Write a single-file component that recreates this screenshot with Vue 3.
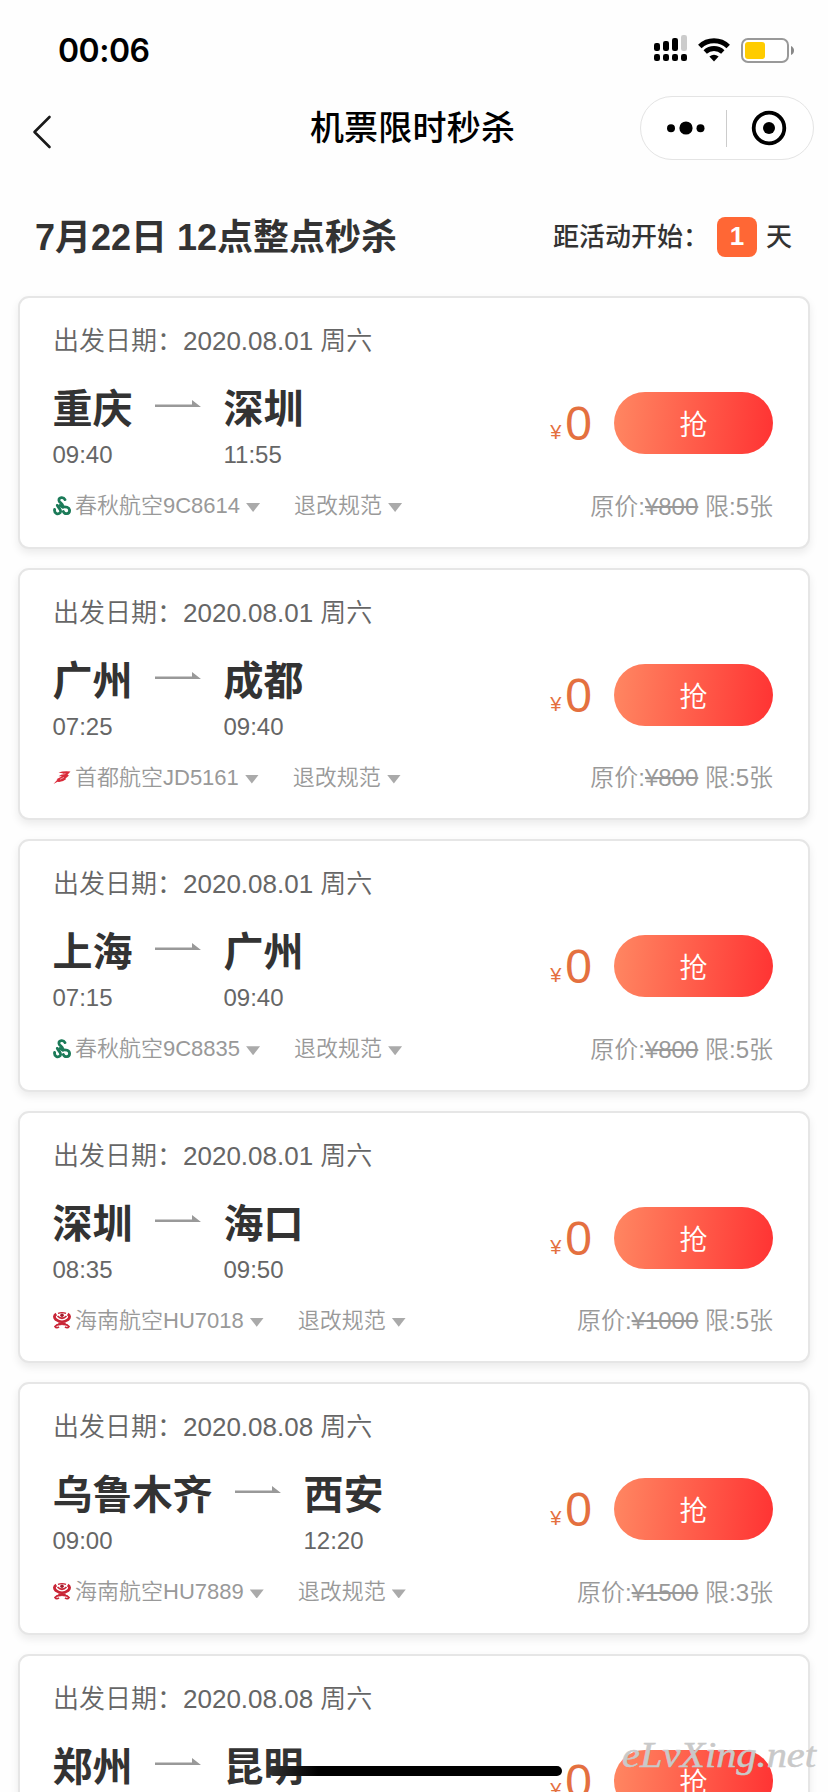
<script setup>
import { ref } from 'vue'

const flights = ref([
  { date: '2020.08.01 周六', from: '重庆', to: '深圳', depart: '09:40', arrive: '11:55', logo: 'spring', flight: '春秋航空9C8614', price: 800, limit: 5 },
  { date: '2020.08.01 周六', from: '广州', to: '成都', depart: '07:25', arrive: '09:40', logo: 'capital', flight: '首都航空JD5161', price: 800, limit: 5 },
  { date: '2020.08.01 周六', from: '上海', to: '广州', depart: '07:15', arrive: '09:40', logo: 'spring', flight: '春秋航空9C8835', price: 800, limit: 5 },
  { date: '2020.08.01 周六', from: '深圳', to: '海口', depart: '08:35', arrive: '09:50', logo: 'hainan', flight: '海南航空HU7018', price: 1000, limit: 5 },
  { date: '2020.08.08 周六', from: '乌鲁木齐', to: '西安', depart: '09:00', arrive: '12:20', logo: 'hainan', flight: '海南航空HU7889', price: 1500, limit: 3 },
  { date: '2020.08.08 周六', from: '郑州', to: '昆明', depart: '', arrive: '', logo: '', flight: '', price: 0, limit: 0 }
])
</script>

<template>
  <div class="page">
    <div class="status-bar">
      <span class="status-bar__time">00:06</span>
      <div class="status-bar__icons">
        <svg class="status-bar__signal" width="34" height="27" viewBox="0 0 34 27">
          <rect x="0" y="8" width="6" height="8" rx="2.2" />
          <rect x="9" y="6" width="6" height="10" rx="2.2" />
          <rect x="18" y="3" width="6" height="13" rx="2.2" />
          <rect x="27" y="0" width="6" height="16" rx="2.2" fill="#ccc" />
          <rect v-for="n in 4" :key="n" :x="(n - 1) * 9" y="19" width="6" height="7" rx="2.2" />
        </svg>
        <svg class="status-bar__wifi" width="32" height="24" viewBox="0 0 32 24">
          <path d="M1.8 8.5A20.5 20.5 0 0 1 30.2 8.5" fill="none" stroke="#000" stroke-width="5" />
          <path d="M7.2 14A12.8 12.8 0 0 1 24.8 14" fill="none" stroke="#000" stroke-width="4.8" />
          <path d="M11.4 18.6Q16 15 20.6 18.6L16 23.4Z" />
        </svg>
        <svg class="status-bar__battery" width="53" height="25" viewBox="0 0 53 25">
          <rect x="1" y="1" width="46" height="23" rx="6" fill="#fff" stroke="#999" stroke-width="2" />
          <rect x="4" y="4" width="20" height="17" rx="3" fill="#fc0" />
          <path d="M50 8Q53 9.500 53 12.500Q53 15.500 50 17Z" fill="#888" />
        </svg>
      </div>
    </div>

    <header class="nav">
      <svg class="nav__back" width="20" height="36" viewBox="0 0 20 36">
        <path d="M17.500 3L2.500 18L17.500 33" fill="none" stroke="#1a1a1a" stroke-width="2.600" stroke-linecap="round" stroke-linejoin="round" />
      </svg>
      <h1 class="nav__title">机票限时秒杀</h1>
      <div class="nav__capsule">
        <svg width="38" height="14" viewBox="0 0 38 14">
          <circle cx="4" cy="7.300" r="4" />
          <circle cx="19" cy="7" r="6.600" />
          <circle cx="33.500" cy="7.300" r="4" />
        </svg>
        <span class="nav__divider"></span>
        <svg width="36" height="36" viewBox="0 0 36 36">
          <circle cx="18" cy="18" r="15.300" fill="none" stroke="#000" stroke-width="3.800" />
          <circle cx="18" cy="18" r="6" />
        </svg>
      </div>
    </header>

    <section class="session">
      <h2 class="session__title">7月22日 12点整点秒杀</h2>
      <div class="session__countdown">
        <span class="session__label">距活动开始：</span>
        <span class="session__days">1</span>
        <span class="session__label">天</span>
      </div>
    </section>

    <main class="list">
      <article v-for="(item, index) in flights" :key="index" class="card">
        <p class="card__date">出发日期：{{ item.date }}</p>
        <div class="card__main">
          <div class="card__route">
            <div class="card__stop">
              <strong class="card__city">{{ item.from }}</strong>
              <span class="card__time">{{ item.depart }}</span>
            </div>
            <svg class="card__arrow" width="46" height="8" viewBox="0 0 46 8">
              <path d="M0 4.500H37V0L46 7H0Z" fill="#999" />
            </svg>
            <div class="card__stop">
              <strong class="card__city">{{ item.to }}</strong>
              <span class="card__time">{{ item.arrive }}</span>
            </div>
          </div>
          <div class="card__buy">
            <span class="card__yen">¥</span>
            <span class="card__price">0</span>
            <button class="card__button" type="button">抢</button>
          </div>
        </div>
        <div v-if="item.flight" class="card__foot">
          <svg v-if="item.logo === 'spring'" class="card__logo" width="18" height="20" viewBox="0 0 18 20">
            <g fill="none" stroke="#1b7a58" stroke-width="2.800" stroke-linecap="round">
              <path d="M12 3.600C10.500 .6 5.900 1.200 5.900 4.200C5.900 7 10.400 7.200 9.800 11" />
              <path d="M1.600 13.500C1 17.500 5 19.200 7.200 16.600C9 14 5.500 12.200 4.300 9.400" />
              <path d="M10.300 15.500C11.500 18.800 16.500 18.300 16.600 14.600C16.500 11 12.500 10.600 9.800 11L7 9.500" />
            </g>
          </svg>
          <svg v-else-if="item.logo === 'capital'" class="card__logo" width="18" height="20" viewBox="0 0 18 20">
            <path d="M5.500 4.500Q11 2.500 17.500 3.500L14.500 6.800L16 7.500L12.500 10.500L13 11.200Q9 14.500 4.500 13.800L.5 16L4.500 11.500L3.500 11.200L9 8.300L5.500 8.200L10.500 5.500Z" fill="#d92b3a" />
            <path d="M8 6.700L12.500 5.600M7 11.300L11 9.400" stroke="#f4b5ba" stroke-width=".8" />
          </svg>
          <svg v-else class="card__logo" width="18" height="20" viewBox="0 0 18 20">
            <g fill="none" stroke="#c92536">
              <path d="M3.300 3Q-.3 5.500 3 8.700Q9 13 15 8.700Q18.300 5.500 14.700 3" stroke-width="2.800" />
              <path d="M4.500 5Q9 9.500 13.500 5" stroke-width="1.700" />
              <path d="M5.500 12Q9 14 12.500 12" stroke-width="1.800" />
              <path d="M8.500 13.500Q4 13 2 15.500Q3.500 17.800 6 15.800" stroke-width="1.700" />
              <path d="M9.500 13.500Q14 13 16 15.500Q14.500 17.800 12 15.800" stroke-width="1.700" />
              <path d="M5 2.300Q9 .8 13 2.300" stroke-width="1.300" />
            </g>
            <circle cx="9" cy="4.300" r="1.800" fill="#9d1c2b" />
          </svg>
          <span class="card__flight">{{ item.flight }}</span>
          <i class="card__caret"></i>
          <span class="card__rules">退改规范</span>
          <i class="card__caret"></i>
          <span class="card__origin">原价:<s>¥{{ item.price }}</s> 限:{{ item.limit }}张</span>
        </div>
      </article>
    </main>

    <div class="home-indicator"></div>
    <svg class="watermark" width="206" height="50" viewBox="0 0 206 50">
      <text x="4" y="33" textLength="194" lengthAdjust="spacingAndGlyphs">eLvXing.net</text>
    </svg>
  </div>
</template>

<style>
body {
  margin: 0;
  background: #fefefe;
}
</style>

<style scoped>
.page {
  position: relative;
  width: 828px;
  height: 1792px;
  overflow: hidden;
  background: #fefefe;
  color: #333;
  font-family: 'Liberation Sans', 'Noto Sans CJK SC', sans-serif;
}

.status-bar {
  display: flex;
  align-items: center;
  justify-content: space-between;
  height: 88px;
  padding: 12px 34px 0 58px;
  box-sizing: border-box;
  color: #000;
}

.status-bar__time {
  font-family: Inter, sans-serif;
  font-size: 32px;
  font-weight: 600;
  letter-spacing: -0.5px;
}

.status-bar__icons {
  display: flex;
  align-items: center;
}

.status-bar__signal {
  margin-top: -3px;
}

.status-bar__wifi {
  margin: 0 11px 0 10px;
}

.nav {
  display: flex;
  align-items: center;
  justify-content: space-between;
  height: 80px;
  padding: 0 14px 0 32px;
}

.nav__back {
  margin-top: 8px;
}

.nav__title {
  margin: 0 0 0 133px;
  color: #000;
  font-size: 34px;
  font-weight: 500;
  line-height: 50px;
  letter-spacing: 0.2px;
}

.nav__capsule {
  display: flex;
  align-items: center;
  width: 174px;
  height: 64px;
  padding: 0 26px;
  box-sizing: border-box;
  justify-content: space-between;
  border: 1px solid #e4e4e4;
  border-radius: 32px;
  background: #fff;
}

.nav__divider {
  width: 1px;
  height: 37px;
  margin-right: 2px;
  background: #ccc;
}

.session {
  display: flex;
  align-items: center;
  justify-content: space-between;
  height: 128px;
  padding: 10px 36px 0 35px;
  box-sizing: border-box;
}

.session__title {
  margin: 0 0 6px;
  font-size: 36px;
  font-weight: 600;
}

.session__countdown {
  display: flex;
  align-items: center;
  font-size: 26px;
  font-weight: 500;
}

.session__label {
  margin-bottom: 6px;
}

.session__days {
  width: 40px;
  height: 40px;
  margin: 0 9px 0 8px;
  border-radius: 8px;
  background: #ff6735;
  color: #fff;
  font-weight: 700;
  line-height: 39px;
  text-align: center;
}

.card {
  width: 792px;
  height: 252.6px;
  margin: 0 0 19px 18px;
  padding: 25px 35px 0 33px;
  box-sizing: border-box;
  border: 2px solid #e6e6e6;
  border-radius: 11px;
  background: #fff;
  box-shadow: 0 4px 8px rgba(0, 0, 0, 0.08);
}

.card__date {
  margin: 0 0 24px;
  color: #666;
  font-size: 26px;
  font-weight: 350;
  line-height: 36px;
}

.card__main {
  display: flex;
  justify-content: space-between;
  height: 86px;
}

.card__route {
  display: flex;
  margin-left: -0.5px;
}

.card__stop {
  display: flex;
  flex-direction: column;
}

.card__city {
  padding-top: 1px;
  font-size: 40px;
  font-weight: 600;
  line-height: 50px;
}

.card__time {
  margin-top: 7px;
  color: #666;
  font-size: 24px;
  line-height: 28px;
}

.card__arrow {
  margin: 17px 23px 0 22px;
}

.card__buy {
  display: flex;
  align-items: center;
  height: 62px;
  margin-top: 9px;
  color: #e4703f;
}

.card__yen {
  margin: 19px 4px 0 0;
  font-size: 20px;
}

.card__price {
  padding-top: 2px;
  font-size: 48px;
  line-height: 60px;
}

.card__button {
  width: 159px;
  height: 62px;
  margin-left: 22px;
  padding: 0;
  border: none;
  border-radius: 31px;
  background: linear-gradient(95deg, #ff8762, #ff3333);
  color: #fff;
  font-family: inherit;
  font-size: 28px;
  font-weight: 350;
}

.card__foot {
  display: flex;
  align-items: center;
  height: 28px;
  margin-top: 23px;
  color: #999;
  font-size: 22px;
  font-weight: 350;
  line-height: 28px;
}

.card__logo {
  margin-right: 4px;
}

.card__caret {
  width: 14px;
  height: 9px;
  margin: 3px 0 0 6px;
  background: #aaa;
  clip-path: polygon(0 0, 100% 0, 50% 100%);
}

.card__rules {
  margin-left: 34px;
}

.card__origin {
  margin: 1px 0 0 auto;
  font-size: 24px;
}

.home-indicator {
  position: absolute;
  left: 268px;
  top: 1766px;
  width: 294px;
  height: 10px;
  border-radius: 5px;
  background: linear-gradient(90deg, #333, #000 50px);
}

.watermark {
  position: absolute;
  left: 618px;
  top: 1734px;
  fill: #c9c9c9;
  stroke: #c9c9c9;
  stroke-width: 0.5px;
  font-family: 'Liberation Serif', serif;
  font-size: 36px;
  font-style: italic;
}
</style>
